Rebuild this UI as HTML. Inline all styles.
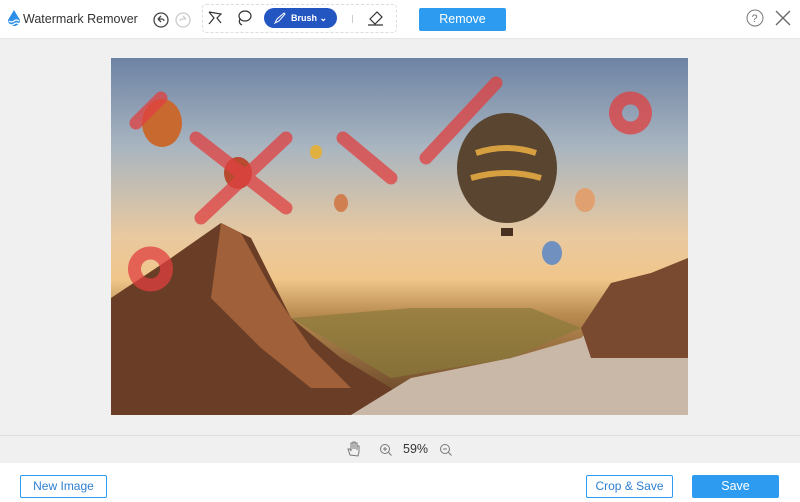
<!DOCTYPE html>
<html><head><style>
*{margin:0;padding:0;box-sizing:border-box}
body{width:800px;height:502px;background:#fff;font-family:"Liberation Sans",sans-serif;position:relative;overflow:hidden}
.top{position:absolute;left:0;top:0;width:800px;height:39px;background:#fff;border-bottom:1px solid #e6e6e6}
.main{position:absolute;left:0;top:39px;width:800px;height:396px;background:#f0f0f0}
.zoom{position:absolute;left:0;top:435px;width:800px;height:28px;background:#f0f0f0;border-top:1px solid #ddd}
.btn{position:absolute;border:1px solid #2d9cf0;color:#2d7fd0;font-size:12px;text-align:center;border-radius:2px}
</style></head><body>
<div class="top">
 <svg style="position:absolute;left:6px;top:10px" width="16" height="18" viewBox="0 0 16 18"><path d="M8 0 L14 10 A6 6 0 0 1 2 10Z" fill="#2d8fe8"/><path d="M3 11 q2.5 2 5 0 t5 0 M3 14 q2.5 2 5 0 t5 0" stroke="#fff" fill="none" stroke-width="1.2"/></svg>
 <div style="position:absolute;left:23px;top:12px;font-size:12.5px;color:#333">Watermark Remover</div>
 <svg style="position:absolute;left:152px;top:11px" width="40" height="18"><circle cx="9" cy="9" r="7" fill="none" stroke="#444" stroke-width="1.3"/><path d="M6 8 l3-3 M6 8 l3 3 M6 8 h4 a2 2 0 0 1 2 2" stroke="#444" fill="none" stroke-width="1.3"/><circle cx="31" cy="9" r="7" fill="none" stroke="#ccc" stroke-width="1.3"/><path d="M34 8 l-3-3 M34 8 h-4 a2 2 0 0 0-2 2" stroke="#ccc" fill="none" stroke-width="1.3"/></svg>
 <div style="position:absolute;left:202px;top:4px;width:195px;height:29px;border:1px dashed #ddd;border-radius:4px"></div>
 <svg style="position:absolute;left:207px;top:10px" width="16" height="16"><path d="M2 2 l5 6 l-5 6 M2 2 l12 2 l-4 4 l4 5" stroke="#333" fill="none" stroke-width="1.2"/></svg>
 <svg style="position:absolute;left:235px;top:9px" width="18" height="18"><ellipse cx="10" cy="7" rx="6" ry="5" stroke="#333" fill="none" stroke-width="1.2"/><path d="M5 10 q-2 4 2 6" stroke="#333" fill="none" stroke-width="1.2"/></svg>
 <div style="position:absolute;left:264px;top:8px;width:73px;height:20px;background:#2456c2;border-radius:10px;color:#fff;font-size:9px;font-weight:bold;line-height:20px;padding-left:27px">Brush ⌄</div>
 <svg style="position:absolute;left:274px;top:12px" width="12" height="12"><path d="M1 11 l2-4 l7-6 l1 1 l-6 7z" stroke="#fff" fill="none"/></svg>
 <div style="position:absolute;left:352px;top:15px;width:1px;height:8px;background:#ccc"></div>
 <svg style="position:absolute;left:367px;top:9px" width="18" height="18"><path d="M3 10 l7-7 l5 5 l-7 7z M1 16 h15" stroke="#333" fill="none" stroke-width="1.2"/></svg>
 <div style="position:absolute;left:419px;top:8px;width:87px;height:23px;background:#2d9cf0;border-radius:2px;color:#fff;font-size:12.5px;text-align:center;line-height:23px">Remove</div>
 <svg style="position:absolute;left:746px;top:9px" width="46" height="20"><circle cx="9" cy="9" r="8" fill="none" stroke="#777"/><text x="5.5" y="13" font-size="11" fill="#777" font-family="Liberation Sans">?</text><path d="M30 2 l14 14 M44 2 l-14 14" stroke="#666" stroke-width="1.3"/></svg>
</div>
<div class="main">
 <svg style="position:absolute;left:111px;top:19px" width="577" height="357" viewBox="0 0 577 357">
  <defs>
   <linearGradient id="sky" x1="0" y1="0" x2="0" y2="1"><stop offset="0" stop-color="#6d83a4"/><stop offset=".25" stop-color="#a9b5c0"/><stop offset=".5" stop-color="#e9c9a0"/><stop offset=".62" stop-color="#f0c68a"/><stop offset=".72" stop-color="#b88a50"/><stop offset="1" stop-color="#5a3a22"/></linearGradient>
  </defs>
  <rect width="577" height="357" fill="url(#sky)"/>
  <path d="M0 240 L60 200 L110 165 L140 180 L180 260 L230 300 L280 330 L300 357 L0 357Z" fill="#6a3e26"/>
  <path d="M110 165 L130 175 L160 230 L200 290 L240 330 L200 330 L150 290 L100 240Z" fill="#a0603a"/>
  <path d="M240 357 L300 320 L400 300 L470 280 L520 230 L577 200 L577 357Z" fill="#c9b8a8"/>
  <path d="M470 270 L500 225 L540 215 L577 200 L577 300 L480 300Z" fill="#7a4a30"/>
  <path d="M180 260 L300 250 L420 250 L470 270 L400 300 L280 320 Z" fill="#8a7a3a" opacity=".7"/>
  <ellipse cx="396" cy="110" rx="50" ry="55" fill="#5a4530"/>
  <path d="M365 95 q30 -10 60 0 M360 120 q35 -10 70 0" stroke="#d6a040" stroke-width="6" fill="none"/>
  <rect x="390" y="170" width="12" height="8" fill="#4a3020"/>
  <ellipse cx="51" cy="65" rx="20" ry="24" fill="#c86a30"/>
  <ellipse cx="127" cy="115" rx="14" ry="16" fill="#b84a30"/>
  <ellipse cx="474" cy="142" rx="10" ry="12" fill="#e0a070"/>
  <ellipse cx="230" cy="145" rx="7" ry="9" fill="#d08050"/>
  <ellipse cx="441" cy="195" rx="10" ry="12" fill="#7090c0"/>
  <ellipse cx="205" cy="94" rx="6" ry="7" fill="#e0b040"/>
  <g stroke="#e04040" stroke-width="13" stroke-linecap="round" fill="none" opacity=".75">
   <path d="M85 80 L175 150 M175 80 L90 160 M232 80 L280 120 M315 100 L385 25"/>
   <path d="M25 65 L50 40 M520 40 a15 15 0 1 1 -1 0"/>
   <path d="M40 195 a16 16 0 1 1 -1 0"/>
  </g>
 </svg>
</div>
<div class="zoom">
 <svg style="position:absolute;left:346px;top:5px" width="14" height="16"><path d="M4 14 l-2-6 l2 0 l1 2 v-8 h2 v6 v-7 h2 v7 v-6 h2 v7 v-4 h2 v6 l-1 4z" stroke="#777" fill="none"/></svg>
 <svg style="position:absolute;left:379px;top:7px" width="14" height="14"><circle cx="6" cy="6" r="4.5" fill="none" stroke="#777"/><path d="M4 6h4M6 4v4M9.5 9.5l3 3" stroke="#777"/></svg>
 <div style="position:absolute;left:403px;top:6px;font-size:12.5px;color:#333">59%</div>
 <svg style="position:absolute;left:439px;top:7px" width="14" height="14"><circle cx="6" cy="6" r="4.5" fill="none" stroke="#777"/><path d="M4 6h4M9.5 9.5l3 3" stroke="#777"/></svg>
</div>
<div class="btn" style="left:20px;top:475px;width:87px;height:23px;line-height:21px">New Image</div>
<div class="btn" style="left:586px;top:475px;width:87px;height:23px;line-height:21px">Crop &amp; Save</div>
<div style="position:absolute;left:692px;top:475px;width:87px;height:23px;background:#2d9cf0;color:#fff;font-size:12.5px;text-align:center;line-height:23px;border-radius:2px">Save</div>
</body></html>
